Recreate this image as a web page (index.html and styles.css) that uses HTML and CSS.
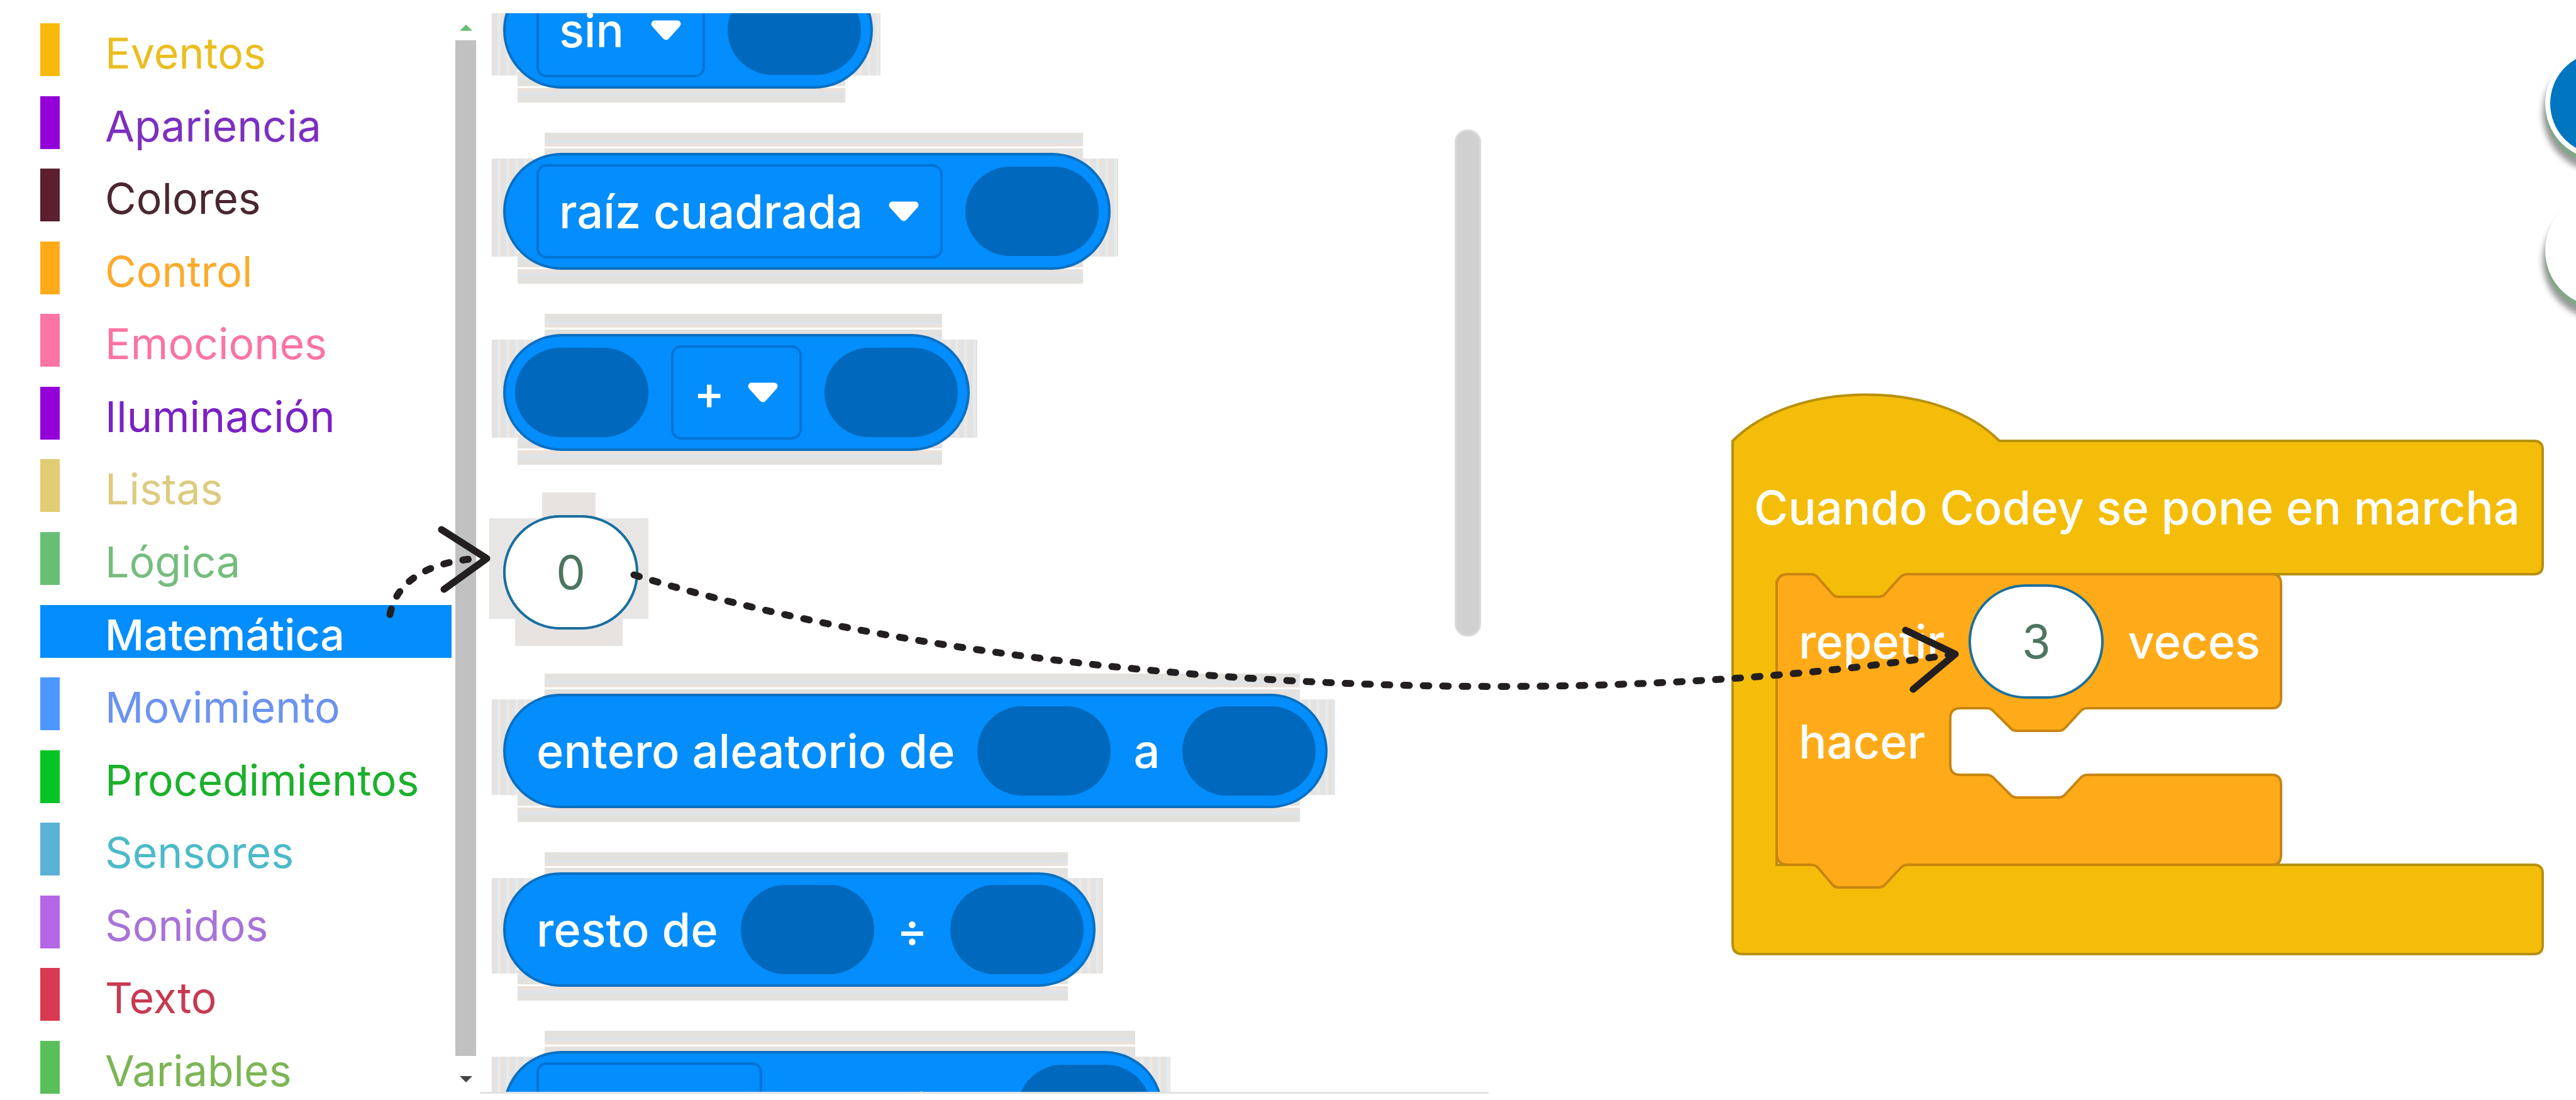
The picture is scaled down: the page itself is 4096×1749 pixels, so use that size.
FILE: index.html
```html
<!DOCTYPE html>
<html lang="es">
<head>
<meta charset="utf-8">
<title>Editor de bloques</title>
<link rel="stylesheet" href="styles.css">
</head>
<body>
<div class="editor">
  <nav class="toolbox" aria-label="Categorías">
    <a class="category eventos" href="#eventos">Eventos</a>
    <a class="category apariencia" href="#apariencia">Apariencia</a>
    <a class="category colores" href="#colores">Colores</a>
    <a class="category control" href="#control">Control</a>
    <a class="category emociones" href="#emociones">Emociones</a>
    <a class="category iluminacion" href="#iluminacion">Iluminación</a>
    <a class="category listas" href="#listas">Listas</a>
    <a class="category logica" href="#logica">Lógica</a>
    <a class="category matematica selected" href="#matematica" aria-current="true">Matemática</a>
    <a class="category movimiento" href="#movimiento">Movimiento</a>
    <a class="category procedimientos" href="#procedimientos">Procedimientos</a>
    <a class="category sensores" href="#sensores">Sensores</a>
    <a class="category sonidos" href="#sonidos">Sonidos</a>
    <a class="category texto" href="#texto">Texto</a>
    <a class="category variables" href="#variables">Variables</a>
  </nav>
  <div class="toolbox-scroll" aria-hidden="true">
    <svg class="step" width="20" height="10" viewBox="0 0 20 10"><path d="M10 0L20 10H0z" fill="#67bf75"/></svg>
    <div class="thumb"></div>
    <svg class="step" width="20" height="10" viewBox="0 0 20 10"><path d="M0 0H20L10 10z" fill="#444"/></svg>
  </div>

  <section class="flyout" aria-label="Bloques de Matemática">
    <div class="stack">
      <div class="block tall lead">
        <select class="field short" aria-label="Función"><option>sin</option></select>
        <input class="slot" type="text" aria-label="Valor">
      </div>
      <div class="block tall lead">
        <select class="field long" aria-label="Operación"><option>raíz cuadrada</option></select>
        <input class="slot" type="text" aria-label="Valor">
      </div>
      <div class="block tall">
        <input class="slot" type="text" aria-label="Primer valor">
        <select class="field tiny" aria-label="Operador"><option>+</option></select>
        <input class="slot" type="text" aria-label="Segundo valor">
      </div>
      <div class="block number">
        <input class="value" type="text" value="0" aria-label="Número">
      </div>
      <div class="block lead">
        <span>entero aleatorio de</span>
        <input class="slot" type="text" aria-label="Desde">
        <span>a</span>
        <input class="slot" type="text" aria-label="Hasta">
      </div>
      <div class="block lead">
        <span>resto de</span>
        <input class="slot" type="text" aria-label="Dividendo">
        <span>÷</span>
        <input class="slot" type="text" aria-label="Divisor">
      </div>
      <div class="block tall lead">
        <select class="field medium" aria-label="Cálculo"><option>suma</option></select>
        <span>de la lista</span>
        <input class="slot" type="text" aria-label="Lista">
      </div>
    </div>
    <div class="flyout-thumb" aria-hidden="true"></div>
  </section>

  <main class="workspace">
    <div class="script">
      <svg class="shape" width="1294" height="896" viewBox="0 0 1294 896" aria-hidden="true">
        <path fill="#f4bd09" stroke="#b8900f" stroke-width="4" d="M2 76C100 -22 330 -22 426 76H1276Q1290 76 1290 90V274Q1290 288 1276 288H280L244 330H160L72 300V750H1276Q1290 750 1290 764V878Q1290 892 1276 892H18Q2 892 2 876z"/>
        <path fill="#ffab19" stroke="#c88510" stroke-width="4" d="M90 288H126Q134 288 139 295L161 320Q165 324 171 324H234Q240 324 244 320L268 293Q273 288 280 288H860Q874 288 874 304V485Q874 501 860 501H566Q559 501 554 507L530 533Q526 537 520 537H454Q448 537 444 533L418 507Q413 501 406 501H364Q348 501 348 517V591Q348 607 364 607H406Q413 607 418 613L444 639Q448 643 454 643H520Q526 643 530 639L554 613Q559 607 566 607H860Q874 607 874 623V734Q874 750 860 750H280Q273 750 268 756L244 782Q240 786 234 786H171Q165 786 161 782L139 756Q134 750 126 750H90Q72 750 72 732V306Q72 288 90 288z"/>
      </svg>
      <div class="line event">Cuando Codey se pone en marcha</div>
      <div class="line repeat">
        <label for="times">repetir</label>
        <input class="value" id="times" type="text" value="3">
        <span>veces</span>
      </div>
      <div class="line do">hacer</div>
    </div>
    <button class="round undo" type="button" aria-label="Ejecutar"></button>
    <button class="round plain" type="button" aria-label="Opciones"></button>
  </main>
</div>

<svg class="guides" aria-hidden="true">
  <g fill="none" stroke="#231f20" stroke-width="11" stroke-linecap="round" stroke-linejoin="round">
    <path stroke-dasharray="9 22" d="M620 977C630 925 680 893 760 888"/>
    <path d="M702 842L774 888L706 937"/>
    <path stroke-dasharray="9 22" d="M1008 914C1563 1087 2446 1142 3100 1041"/>
    <path d="M3030 1002L3109 1040L3042 1096"/>
  </g>
</svg>
</body>
</html>
```
FILE: styles.css
```css
* {
  box-sizing: border-box;
}

body {
  margin: 0;
  overflow: hidden;
  background: #fff;
  font-family: Inter, "Noto Sans", sans-serif;
}

.editor {
  display: flex;
  height: 100vh;
}

/* Category list */
.toolbox {
  display: flex;
  flex-direction: column;
  justify-content: space-between;
  width: 718px;
  padding: 37px 0 10px 64px;
}

.category {
  height: 84px;
  padding: 10px 0 0 72px;
  border-left: 31px solid var(--tone);
  color: var(--ink, var(--tone));
  font-size: 68px;
  line-height: 74px;
  text-decoration: none;
}

.eventos { --tone: #f7b90b; --ink: #ebbd20; }
.apariencia { --tone: #9400d8; --ink: #7c2fc0; }
.colores { --tone: #5b1f30; --ink: #4a2730; }
.control { --tone: #ffab19; --ink: #fbab2c; }
.emociones { --tone: #fb74a4; }
.iluminacion { --tone: #9400d8; --ink: #7a22c4; }
.listas { --tone: #e2cd72; --ink: #dccb80; }
.logica { --tone: #67bf75; --ink: #74bd7e; }
.matematica { --tone: #048dfc; }
.movimiento { --tone: #4c97ff; --ink: #6c93f0; }
.procedimientos { --tone: #06c423; --ink: #1cb02c; }
.sensores { --tone: #5cb1d6; --ink: #4bbac8; }
.sonidos { --tone: #b566e6; --ink: #a873d8; }
.texto { --tone: #d83a52; --ink: #c73a52; }
.variables { --tone: #59c059; --ink: #7db556; }

.category.selected {
  background: #048dfc;
  color: #fff;
  font-weight: 500;
}

.toolbox-scroll {
  display: flex;
  flex-direction: column;
  align-items: center;
  width: 45px;
  padding: 39px 6px 28px;
  gap: 15px;
}

.toolbox-scroll .step {
  flex: none;
}

.toolbox-scroll .thumb {
  flex: 1;
  width: 33px;
  margin-bottom: 17px;
  background: #c1c1c1;
}

/* Block drawer */
.flyout {
  display: flex;
  justify-content: space-between;
  width: 1604px;
  height: calc(100vh - 31px);
  margin-top: 21px;
  padding: 0 12px 0 37px;
  border-bottom: 3px solid #e2e2e2;
  overflow: hidden;
}

.stack {
  display: flex;
  flex-direction: column;
  align-items: flex-start;
  gap: 102px;
  margin-top: -66px;
}

.block {
  position: relative;
  display: flex;
  flex: none;
  align-items: center;
  gap: 36px;
  height: 182px;
  padding: 0 15px;
  border: 4px solid #0a6fc0;
  border-radius: 93px;
  background: #048dfc;
  color: #fff;
  font-size: 74px;
  font-weight: 500;
  white-space: nowrap;
}

.block.tall {
  height: 186px;
}

.block.lead {
  padding-left: 49px;
}

.block.number {
  padding: 0;
  border: 0;
}

/* Soft grey surround behind each block */
.block::before {
  content: "";
  position: absolute;
  inset: -36px -16px -26px -22px;
  z-index: -1;
  background:
    repeating-linear-gradient(#e3e1de 0 12px, #dde4ea 12px 16px, #e9e1dc 16px 22px, #fff 22px 25px) 84px 0 / calc(100% - 140px) 40% no-repeat,
    repeating-linear-gradient(#fff 0 3px, #e9e1dc 3px 10px, #dde4ea 10px 14px, #e3e1de 14px 26px) 41px 100% / calc(100% - 97px) 52px no-repeat,
    repeating-linear-gradient(90deg, #e9e1dc 0 5px, #dde4ea 5px 9px, #e9e9e7 9px 14px) 0 41px / 100% calc(100% - 84px) no-repeat;
}

.block.number::before {
  background:
    linear-gradient(#e6e3e0, #e6e3e0) 84px 0 / calc(100% - 168px) 50% no-repeat,
    linear-gradient(#e6e3e0, #e6e3e0) 41px 100% / calc(100% - 82px) 50% no-repeat,
    linear-gradient(#e8e6e4, #e8e6e4) 0 41px / 100% calc(100% - 84px) no-repeat;
}

.flyout,
.stack {
  isolation: isolate;
}

.slot {
  width: 212px;
  height: 142px;
  padding: 0;
  border: 0;
  border-radius: 71px;
  background: #0069bd;
}

.field {
  height: 150px;
  padding: 0 36px 0 32px;
  border: 4px solid #0274d4;
  border-radius: 16px;
  appearance: none;
  background: url("data:image/svg+xml,%3Csvg xmlns='http://www.w3.org/2000/svg' viewBox='0 0 48 32'%3E%3Cpath d='M6 6H42L24 26z' fill='%23fff' stroke='%23fff' stroke-width='11' stroke-linejoin='round'/%3E%3C/svg%3E") right 34px center / 48px 32px no-repeat;
  color: #fff;
  font: inherit;
}

.field.tiny { width: 208px; }
.field.short { width: 268px; }
.field.medium { width: 359px; }
.field.long { width: 646px; }

.value {
  width: 215px;
  height: 182px;
  padding: 0;
  border: 4px solid #1c6f9c;
  border-radius: 91px;
  background: #fff;
  color: #4d7560;
  font: 400 74px Inter, sans-serif;
  text-align: center;
}

.flyout-thumb {
  width: 42px;
  height: 806px;
  margin-top: 185px;
  border: 3px solid #dadada;
  border-radius: 20px;
  background: #d0d0d0;
}

/* Canvas */
.workspace {
  position: relative;
  flex: 1;
  overflow: hidden;
}

.script {
  position: absolute;
  top: 625px;
  left: 386px;
  display: flex;
  flex-direction: column;
  width: 1294px;
  height: 896px;
  color: #fff;
  font-size: 74px;
  font-weight: 500;
  white-space: nowrap;
}

.shape {
  position: absolute;
  top: 0;
  left: 0;
}

.line {
  position: relative;
  display: flex;
  align-items: center;
}

.line.event {
  height: 212px;
  margin-top: 76px;
  padding-left: 36px;
}

.line.repeat {
  gap: 38px;
  height: 213px;
  padding-left: 107px;
}

.line.do {
  height: 106px;
  padding-left: 107px;
}

.round {
  position: absolute;
  right: -130px;
  width: 179px;
  height: 179px;
  border: 8px solid #fff;
  border-radius: 50%;
  box-shadow: 0 8px 2px #7fa886, 0 16px 10px 4px #9a9a9a;
}

.round.undo {
  top: 75px;
  background: #0075c0;
}

.round.plain {
  top: 309px;
  background: #fff;
}

/* Dotted arrows over everything */
.guides {
  position: absolute;
  top: 0;
  left: 0;
  width: 100%;
  height: 100%;
  pointer-events: none;
}
```
